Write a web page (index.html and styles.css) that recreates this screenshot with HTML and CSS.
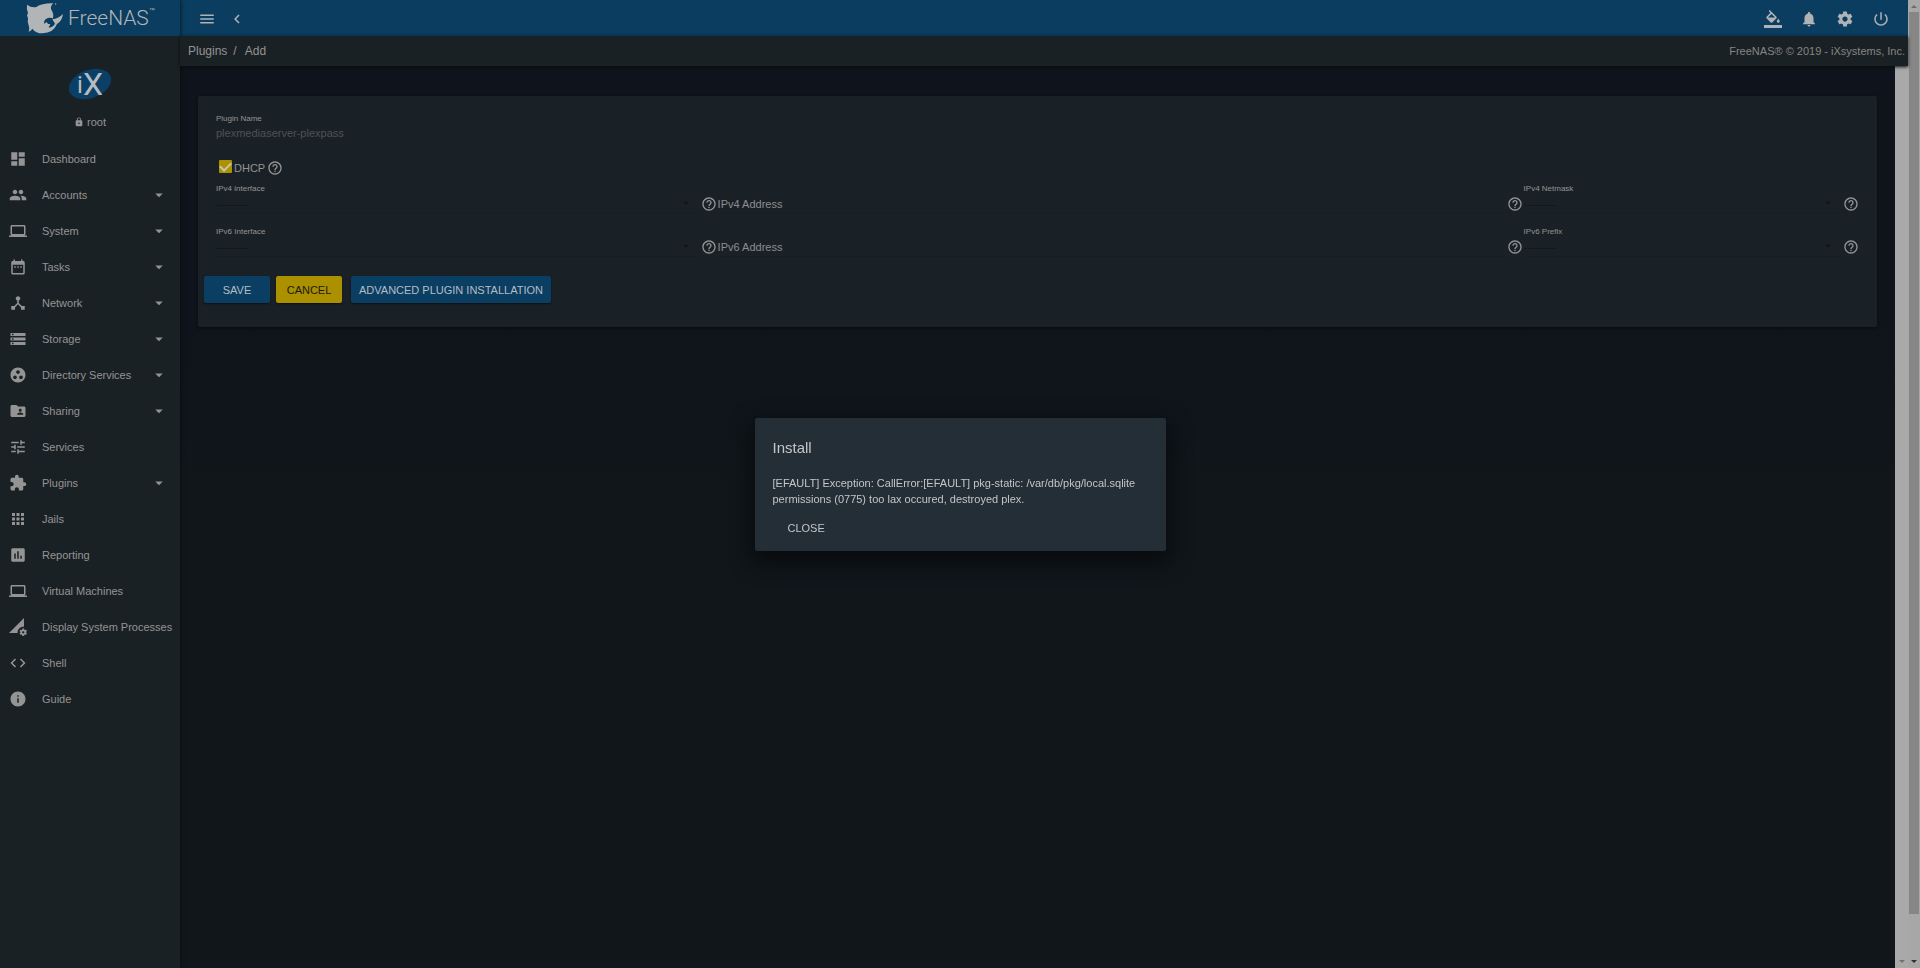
FILE: index.html
```html
<!DOCTYPE html>
<html lang="en">
<head>
<meta charset="utf-8">
<title>FreeNAS - Plugins - Add</title>
<link rel="stylesheet" href="styles.css">
</head>
<body>
<svg class="sprite" aria-hidden="true">
  <symbol id="menu" viewBox="0 0 24 24"><path d="M3 18h18v-2H3v2zm0-5h18v-2H3v2zm0-7v2h18V6H3z"/></symbol>
  <symbol id="chevron" viewBox="0 0 24 24"><path d="M15.41 7.41L14 6l-6 6 6 6 1.41-1.41L10.83 12z"/></symbol>
  <symbol id="fill" viewBox="0 0 24 24"><path d="M16.56 8.94L7.62 0 6.21 1.41l2.38 2.38-5.15 5.15c-.59.59-.59 1.54 0 2.12l5.5 5.5c.29.29.68.44 1.06.44s.77-.15 1.06-.44l5.5-5.5c.59-.58.59-1.53 0-2.12zM5.21 10L10 5.21 14.79 10H5.21zM19 11.5s-2 2.17-2 3.5c0 1.1.9 2 2 2s2-.9 2-2c0-1.33-2-3.5-2-3.5zM0 20h24v4H0z"/></symbol>
  <symbol id="bell" viewBox="0 0 24 24"><path d="M12 22c1.1 0 2-.9 2-2h-4c0 1.1.89 2 2 2zm6-6v-5c0-3.07-1.64-5.64-4.5-6.32V4c0-.83-.67-1.5-1.5-1.5s-1.5.67-1.5 1.5v.68C7.63 5.36 6 7.92 6 11v5l-2 2v1h16v-1l-2-2z"/></symbol>
  <symbol id="gear" viewBox="0 0 24 24"><path d="M19.43 12.98c.04-.32.07-.64.07-.98s-.03-.66-.07-.98l2.11-1.65c.19-.15.24-.42.12-.64l-2-3.46c-.12-.22-.39-.3-.61-.22l-2.49 1c-.52-.4-1.08-.73-1.69-.98l-.38-2.65C14.46 2.18 14.25 2 14 2h-4c-.25 0-.46.18-.49.42l-.38 2.65c-.61.25-1.17.59-1.69.98l-2.49-1c-.23-.09-.49 0-.61.22l-2 3.46c-.13.22-.07.49.12.64l2.11 1.65c-.04.32-.07.65-.07.98s.03.66.07.98l-2.11 1.65c-.19.15-.24.42-.12.64l2 3.46c.12.22.39.3.61.22l2.49-1c.52.4 1.08.73 1.69.98l.38 2.65c.03.24.24.42.49.42h4c.25 0 .46-.18.49-.42l.38-2.65c.61-.25 1.17-.59 1.69-.98l2.49 1c.23.09.49 0 .61-.22l2-3.46c.12-.22.07-.49-.12-.64l-2.11-1.65zM12 15.5c-1.93 0-3.5-1.57-3.5-3.5s1.57-3.5 3.5-3.5 3.5 1.57 3.5 3.5-1.57 3.5-3.5 3.5z"/></symbol>
  <symbol id="power" viewBox="0 0 24 24"><path d="M13 3h-2v10h2V3zm4.83 2.17l-1.42 1.42C17.99 7.86 19 9.81 19 12c0 3.87-3.13 7-7 7s-7-3.13-7-7c0-2.19 1.01-4.14 2.58-5.42L6.17 5.17C4.23 6.82 3 9.26 3 12c0 4.97 4.03 9 9 9s9-4.03 9-9c0-2.74-1.23-5.18-3.17-6.83z"/></symbol>
  <symbol id="lock" viewBox="0 0 24 24"><path d="M18 8h-1V6c0-2.76-2.24-5-5-5S7 3.24 7 6v2H6c-1.1 0-2 .9-2 2v10c0 1.1.9 2 2 2h12c1.1 0 2-.9 2-2V10c0-1.1-.9-2-2-2zm-6 9c-1.1 0-2-.9-2-2s.9-2 2-2 2 .9 2 2-.9 2-2 2zm3.1-9H8.9V6c0-1.71 1.39-3.1 3.1-3.1 1.71 0 3.1 1.39 3.1 3.1v2z"/></symbol>
  <symbol id="dashboard" viewBox="0 0 24 24"><path d="M3 13h8V3H3v10zm0 8h8v-6H3v6zm10 0h8V11h-8v10zm0-18v6h8V3h-8z"/></symbol>
  <symbol id="people" viewBox="0 0 24 24"><path d="M16 11c1.66 0 2.99-1.34 2.99-3S17.66 5 16 5c-1.66 0-3 1.34-3 3s1.34 3 3 3zm-8 0c1.66 0 2.99-1.34 2.99-3S9.66 5 8 5C6.34 5 5 6.34 5 8s1.34 3 3 3zm0 2c-2.33 0-7 1.17-7 3.5V19h14v-2.5c0-2.33-4.67-3.5-7-3.5zm8 0c-.29 0-.62.02-.97.05 1.16.84 1.97 1.97 1.97 3.45V19h6v-2.5c0-2.33-4.67-3.5-7-3.5z"/></symbol>
  <symbol id="laptop" viewBox="0 0 24 24"><path d="M20 18c1.1 0 1.99-.9 1.99-2L22 6c0-1.1-.9-2-2-2H4c-1.1 0-2 .9-2 2v10c0 1.1.9 2 2 2H0v2h24v-2h-4zM4 6h16v10H4V6z"/></symbol>
  <symbol id="date" viewBox="0 0 24 24"><path d="M9 11H7v2h2v-2zm4 0h-2v2h2v-2zm4 0h-2v2h2v-2zm2-7h-1V2h-2v2H8V2H6v2H5c-1.11 0-1.99.9-1.99 2L3 20c0 1.1.89 2 2 2h14c1.1 0 2-.9 2-2V6c0-1.1-.9-2-2-2zm0 16H5V9h14v11z"/></symbol>
  <symbol id="hub" viewBox="0 0 24 24"><path d="M17 16l-4-4V8.82C14.16 8.4 15 7.3 15 6c0-1.66-1.34-3-3-3S9 4.34 9 6c0 1.3.84 2.4 2 2.82V12l-4 4H3v5h5v-3.05l4-4.2 4 4.2V21h5v-5h-4z"/></symbol>
  <symbol id="storage" viewBox="0 0 24 24"><path d="M2 20h20v-4H2v4zm2-3h2v2H4v-2zM2 4v4h20V4H2zm4 3H4V5h2v2zm-4 7h20v-4H2v4zm2-3h2v2H4v-2z"/></symbol>
  <symbol id="group" viewBox="0 0 24 24"><path d="M12 2C6.48 2 2 6.48 2 12s4.48 10 10 10 10-4.48 10-10S17.52 2 12 2zM8 17.5c-1.38 0-2.5-1.12-2.5-2.5s1.12-2.5 2.5-2.5 2.5 1.12 2.5 2.5-1.12 2.5-2.5 2.5zM9.5 8c0-1.38 1.12-2.5 2.5-2.5s2.5 1.12 2.5 2.5-1.12 2.5-2.5 2.5S9.5 9.38 9.5 8zm6.5 9.5c-1.38 0-2.5-1.12-2.5-2.5s1.12-2.5 2.5-2.5 2.5 1.12 2.5 2.5-1.12 2.5-2.5 2.5z"/></symbol>
  <symbol id="folder" viewBox="0 0 24 24"><path d="M20 6h-8l-2-2H4c-1.1 0-1.99.9-1.99 2L2 18c0 1.1.9 2 2 2h16c1.1 0 2-.9 2-2V8c0-1.1-.9-2-2-2zm-5 3c1.1 0 2 .9 2 2s-.9 2-2 2-2-.9-2-2 .9-2 2-2zm4 8h-8v-1c0-1.33 2.67-2 4-2s4 .67 4 2v1z"/></symbol>
  <symbol id="tune" viewBox="0 0 24 24"><path d="M3 17v2h6v-2H3zM3 5v2h10V5H3zm10 16v-2h8v-2h-8v-2h-2v6h2zM7 9v2H3v2h4v2h2V9H7zm14 4v-2H11v2h10zm-6-4h2V7h4V5h-4V3h-2v6z"/></symbol>
  <symbol id="extension" viewBox="0 0 24 24"><path d="M20.5 11H19V7c0-1.1-.9-2-2-2h-4V3.5C13 2.12 11.88 1 10.5 1S8 2.12 8 3.5V5H4c-1.1 0-1.99.9-1.99 2v3.8H3.5c1.49 0 2.7 1.21 2.7 2.7s-1.21 2.7-2.7 2.7H2V20c0 1.1.9 2 2 2h3.8v-1.5c0-1.49 1.21-2.7 2.7-2.7 1.49 0 2.7 1.21 2.7 2.7V22H17c1.1 0 2-.9 2-2v-4h1.5c1.38 0 2.5-1.12 2.5-2.5S21.88 11 20.5 11z"/></symbol>
  <symbol id="apps" viewBox="0 0 24 24"><path d="M4 8h4V4H4v4zm6 12h4v-4h-4v4zm-6 0h4v-4H4v4zm0-6h4v-4H4v4zm6 0h4v-4h-4v4zm6-10v4h4V4h-4zm-6 4h4V4h-4v4zm6 6h4v-4h-4v4zm0 6h4v-4h-4v4z"/></symbol>
  <symbol id="chart" viewBox="0 0 24 24"><path d="M19 3H5c-1.1 0-2 .9-2 2v14c0 1.1.9 2 2 2h14c1.1 0 2-.9 2-2V5c0-1.1-.9-2-2-2zM9 17H7v-7h2v7zm4 0h-2V7h2v10zm4 0h-2v-4h2v4z"/></symbol>
  <symbol id="process" viewBox="0 0 24 24"><path d="M18.99 11.5c.34 0 .67.03 1 .07L20 0 0 20h11.56c-.04-.33-.07-.66-.07-1 0-4.14 3.36-7.5 7.5-7.5zm3.71 7.99c.02-.16.04-.32.04-.49 0-.17-.01-.33-.04-.49l1.06-.83c.09-.08.12-.21.06-.32l-1-1.73c-.06-.11-.19-.15-.31-.11l-1.24.5c-.26-.2-.54-.37-.85-.49l-.19-1.32c-.01-.12-.12-.21-.24-.21h-2c-.12 0-.23.09-.25.21l-.19 1.32c-.3.13-.59.29-.85.49l-1.24-.5c-.11-.04-.24 0-.31.11l-1 1.73c-.06.11-.04.24.06.32l1.06.83c-.02.16-.03.32-.03.49 0 .17.01.33.03.49l-1.06.83c-.09.08-.12.21-.06.32l1 1.73c.06.11.19.15.31.11l1.24-.5c.26.2.54.37.85.49l.19 1.32c.02.12.12.21.25.21h2c.12 0 .23-.09.25-.21l.19-1.32c.3-.13.59-.29.84-.49l1.25.5c.11.04.24 0 .31-.11l1-1.73c.06-.11.03-.24-.06-.32l-1.07-.83zm-3.71 1.01c-.83 0-1.5-.67-1.5-1.5s.67-1.5 1.5-1.5 1.5.67 1.5 1.5-.67 1.5-1.5 1.5z"/></symbol>
  <symbol id="code" viewBox="0 0 24 24"><path d="M9.4 16.6L4.8 12l4.6-4.6L8 6l-6 6 6 6 1.4-1.4zm5.2 0l4.6-4.6-4.6-4.6L16 6l6 6-6 6-1.4-1.4z"/></symbol>
  <symbol id="info" viewBox="0 0 24 24"><path d="M12 2C6.48 2 2 6.48 2 12s4.48 10 10 10 10-4.48 10-10S17.52 2 12 2zm1 15h-2v-6h2v6zm0-8h-2V7h2v2z"/></symbol>
  <symbol id="drop" viewBox="0 0 24 24"><path d="M7 10l5 5 5-5z"/></symbol>
  <symbol id="help" viewBox="0 0 24 24"><path d="M11 18h2v-2h-2v2zm1-16C6.48 2 2 6.48 2 12s4.48 10 10 10 10-4.48 10-10S17.52 2 12 2zm0 18c-4.41 0-8-3.59-8-8s3.59-8 8-8 8 3.59 8 8-3.59 8-8 8zm0-14c-2.21 0-4 1.79-4 4h2c0-1.1.9-2 2-2s2 .9 2 2c0 2-3 1.75-3 5h2c0-2.25 3-2.5 3-5 0-2.21-1.79-4-4-4z"/></symbol>
</svg>

<div class="app">
  <aside class="sidebar">
    <a class="brand" href="#">
      <svg class="shark" viewBox="0 0 114 96" aria-hidden="true"><path d="M3 8Q16 18 31 15Q48 3 82 4Q73 11 75 22Q84 34 81 49Q69 45 60 51Q52 57 55 65L62 60L66 66L73 66L68 77Q82 75 87 65L79 52Q96 51 111 36Q108 58 93 66Q82 93 50 94Q29 94 19 80Q15 87 8 89Q11 82 9 74Q3 60 6 49L3 40L6 34Q1 20 3 8Z"/><circle cx="89" cy="6" r="2"/></svg>
      <span class="brand-name">FreeNAS</span><span class="brand-tm">™</span>
    </a>
    <div class="profile">
      <svg class="ix" viewBox="0 0 44 36" role="img" aria-label="iX"><ellipse cx="22" cy="18" rx="22" ry="14" transform="rotate(-20 22 18)"/><text class="ix-i" x="9" y="27">i</text><text class="ix-x" x="15" y="29">X</text></svg>
      <div class="user"><svg class="icon-xs"><use href="#lock"/></svg><span>root</span></div>
    </div>
    <nav class="nav">
      <a href="#"><svg class="icon"><use href="#dashboard"/></svg><span>Dashboard</span></a>
      <a href="#"><svg class="icon"><use href="#people"/></svg><span>Accounts</span><svg class="icon caret"><use href="#drop"/></svg></a>
      <a href="#"><svg class="icon"><use href="#laptop"/></svg><span>System</span><svg class="icon caret"><use href="#drop"/></svg></a>
      <a href="#"><svg class="icon"><use href="#date"/></svg><span>Tasks</span><svg class="icon caret"><use href="#drop"/></svg></a>
      <a href="#"><svg class="icon"><use href="#hub"/></svg><span>Network</span><svg class="icon caret"><use href="#drop"/></svg></a>
      <a href="#"><svg class="icon"><use href="#storage"/></svg><span>Storage</span><svg class="icon caret"><use href="#drop"/></svg></a>
      <a href="#"><svg class="icon"><use href="#group"/></svg><span>Directory Services</span><svg class="icon caret"><use href="#drop"/></svg></a>
      <a href="#"><svg class="icon"><use href="#folder"/></svg><span>Sharing</span><svg class="icon caret"><use href="#drop"/></svg></a>
      <a href="#"><svg class="icon"><use href="#tune"/></svg><span>Services</span></a>
      <a href="#"><svg class="icon"><use href="#extension"/></svg><span>Plugins</span><svg class="icon caret"><use href="#drop"/></svg></a>
      <a href="#"><svg class="icon"><use href="#apps"/></svg><span>Jails</span></a>
      <a href="#"><svg class="icon"><use href="#chart"/></svg><span>Reporting</span></a>
      <a href="#"><svg class="icon"><use href="#laptop"/></svg><span>Virtual Machines</span></a>
      <a href="#"><svg class="icon"><use href="#process"/></svg><span>Display System Processes</span></a>
      <a href="#"><svg class="icon"><use href="#code"/></svg><span>Shell</span></a>
      <a href="#"><svg class="icon"><use href="#info"/></svg><span>Guide</span></a>
    </nav>
  </aside>

  <div class="main">
    <header class="topbar">
      <div class="tools tools-left">
        <button type="button" aria-label="Toggle menu"><svg class="icon"><use href="#menu"/></svg></button>
        <button type="button" aria-label="Collapse menu"><svg class="icon"><use href="#chevron"/></svg></button>
      </div>
      <div class="tools">
        <button type="button" aria-label="Theme"><svg class="icon"><use href="#fill"/></svg></button>
        <button type="button" aria-label="Notifications"><svg class="icon"><use href="#bell"/></svg></button>
        <button type="button" aria-label="Settings"><svg class="icon"><use href="#gear"/></svg></button>
        <button type="button" aria-label="Power"><svg class="icon"><use href="#power"/></svg></button>
      </div>
    </header>
    <div class="crumbs">
      <div class="trail"><a href="#">Plugins</a><span class="slash">/</span><a href="#">Add</a></div>
      <span class="copyright">FreeNAS® © 2019 - iXsystems, Inc.</span>
    </div>
    <div class="view">
      <main class="content">
        <form class="card">
          <div class="field">
            <label for="name">Plugin Name</label>
            <input class="control" id="name" type="text" value="plexmediaserver-plexpass" readonly>
          </div>
          <div class="check">
            <input id="dhcp" type="checkbox" checked>
            <label for="dhcp">DHCP</label>
            <svg class="help"><use href="#help"/></svg>
          </div>
          <div class="row">
            <div class="cell">
              <div class="field"><label for="v4if">IPv4 interface</label>
                <div class="pick"><select class="control" id="v4if"><option>---------</option></select><svg class="pick-arrow"><use href="#drop"/></svg></div></div>
              <svg class="help"><use href="#help"/></svg>
            </div>
            <div class="cell">
              <div class="field"><input class="control address" type="text" placeholder="IPv4 Address" aria-label="IPv4 Address"></div>
              <svg class="help"><use href="#help"/></svg>
            </div>
            <div class="cell">
              <div class="field"><label for="v4mask">IPv4 Netmask</label>
                <div class="pick"><select class="control" id="v4mask"><option>---------</option></select><svg class="pick-arrow"><use href="#drop"/></svg></div></div>
              <svg class="help"><use href="#help"/></svg>
            </div>
          </div>
          <div class="row">
            <div class="cell">
              <div class="field"><label for="v6if">IPv6 Interface</label>
                <div class="pick"><select class="control" id="v6if"><option>---------</option></select><svg class="pick-arrow"><use href="#drop"/></svg></div></div>
              <svg class="help"><use href="#help"/></svg>
            </div>
            <div class="cell">
              <div class="field"><input class="control address" type="text" placeholder="IPv6 Address" aria-label="IPv6 Address"></div>
              <svg class="help"><use href="#help"/></svg>
            </div>
            <div class="cell">
              <div class="field"><label for="v6prefix">IPv6 Prefix</label>
                <div class="pick"><select class="control" id="v6prefix"><option>---------</option></select><svg class="pick-arrow"><use href="#drop"/></svg></div></div>
              <svg class="help"><use href="#help"/></svg>
            </div>
          </div>
          <div class="actions">
            <button class="btn primary" type="submit">SAVE</button>
            <button class="btn accent" type="button">CANCEL</button>
            <button class="btn primary advanced" type="button">ADVANCED PLUGIN INSTALLATION</button>
          </div>
        </form>
      </main>
      <div class="inner-scroll" aria-hidden="true"><i class="arrow down dim"></i></div>
    </div>
  </div>
</div>
<div class="page-scroll" aria-hidden="true">
  <i class="arrow up"></i>
  <div class="track"><div class="thumb"></div></div>
  <i class="arrow down"></i>
</div>

<div class="overlay">
  <section class="dialog" role="dialog" aria-labelledby="dlg-title">
    <h1 id="dlg-title">Install</h1>
    <p>[EFAULT] Exception: CallError:[EFAULT] pkg-static: /var/db/pkg/local.sqlite permissions (0775) too lax occured, destroyed plex.</p>
    <button class="close" type="button">CLOSE</button>
  </section>
</div>
</body>
</html>
```
FILE: styles.css
```css
* { box-sizing: border-box; }

body {
  margin: 0;
  display: flex;
  height: 100vh;
  overflow: hidden;
  background: #10161a;
  color: #949494;
  font: 11px/16px "Liberation Sans", Arial, sans-serif;
}

a { color: inherit; text-decoration: none; }
button, input, select { font: inherit; color: inherit; }
button { border: 0; background: none; padding: 0; cursor: pointer; }
svg { display: block; flex: none; fill: currentColor; }
.sprite { position: absolute; width: 0; height: 0; }
.icon { width: 18px; height: 18px; }
.icon-xs { width: 10px; height: 10px; }

.app { flex: 1; min-width: 0; display: flex; }

/* Sidebar */
.sidebar {
  width: 180px;
  flex: none;
  background: #1a2125;
  box-shadow: 0 0 4px #080b0e;
  z-index: 1;
}
.brand {
  display: flex;
  align-items: center;
  height: 36px;
  padding-left: 26px;
  background: #0a3d5f;
  color: #b2b5b7;
}
.shark { width: 38px; height: 32px; }
.brand-name { margin-left: 4px; font: 300 21px/36px Roboto, sans-serif; }
.brand-tm { align-self: flex-start; font-size: 6px; line-height: 20px; }
.profile {
  display: flex;
  flex-direction: column;
  align-items: center;
  gap: 12px;
  height: 105px;
  padding-top: 30px;
}
.ix { width: 44px; height: 36px; overflow: visible; fill: #0a4068; }
.ix text { fill: #b8bbbd; font-family: Roboto, sans-serif; }
.ix-i { font-size: 24px; }
.ix-x { font-size: 32px; }
.user { display: flex; align-items: center; gap: 3px; height: 16px; }
.nav a {
  display: flex;
  align-items: center;
  gap: 15px;
  height: 36px;
  padding: 0 12px 0 9px;
  white-space: nowrap;
}
.nav .caret { margin-left: auto; }

/* Header */
.main { flex: 1; min-width: 0; display: flex; flex-direction: column; }
.topbar {
  display: flex;
  justify-content: space-between;
  align-items: center;
  height: 36px;
  padding: 2px 18px 0;
  background: #0a3d5f;
  color: #b0b3b5;
}
.tools { display: flex; gap: 18px; }
.tools-left { gap: 12px; }
.crumbs {
  display: flex;
  justify-content: space-between;
  align-items: center;
  height: 30px;
  padding: 0 3px 0 8px;
  background: #1a2124;
  box-shadow: 0 1px 3px #090c0f;
  z-index: 1;
}
.trail { font-size: 12px; display: flex; }
.slash { padding: 0 8px 0 6px; }
.copyright { color: #858585; }

/* Form */
.view { flex: 1; display: flex; min-height: 0; }
.content {
  flex: 1;
  min-width: 0;
  padding: 30px 18px;
  background: linear-gradient(#0f131b 250px, #10161a 420px);
}
.card {
  padding: 18px 18px 24px;
  border-radius: 2px;
  background: #1a2126;
  box-shadow: 0 1px 3px #080b0f;
}
.field { flex: 1; min-width: 0; }
.field label { display: block; font-size: 8px; line-height: 10px; }
.control {
  display: block;
  width: 100%;
  height: 20px;
  margin: 0;
  padding: 0;
  border: 0;
  border-bottom: 1px dotted #141a1f;
  border-radius: 0;
  outline: 0;
  background: none;
  appearance: none;
}
#name { height: 18px; border-bottom-color: #181f24; color: #4d5154; }
select.control { color: #101417; }
.address::placeholder { color: #8b8e90; opacity: 1; }
.pick { position: relative; }
.pick-arrow {
  position: absolute;
  right: 3px;
  top: 1px;
  width: 16px;
  height: 16px;
  color: #12161a;
  pointer-events: none;
}
.help { width: 16px; height: 16px; }
.check {
  display: flex;
  align-items: center;
  gap: 2px;
  height: 16px;
  margin: 18px 0 8px 3px;
}
.check input {
  display: flex;
  justify-content: center;
  width: 13px;
  height: 13px;
  margin: 0 0 4px;
  border-radius: 1px;
  background: #ac9100;
  appearance: none;
}
.check input:checked::before {
  content: "";
  width: 5px;
  height: 9px;
  border: solid #c8c8b0;
  border-width: 0 2px 2px 0;
  transform: rotate(45deg);
}
.row {
  display: grid;
  grid-template-columns: 500fr 804fr 335fr;
  gap: 1px;
  height: 30px;
  margin-bottom: 13px;
}
.cell { display: flex; align-items: flex-end; gap: 4px; }
.cell .help { margin-bottom: 2px; }
.actions { display: flex; gap: 6px; margin: 19px -12px 0; }
.btn {
  height: 27px;
  min-width: 66px;
  padding: 0 8px;
  border-radius: 2px;
  color: #b5bdc2;
  box-shadow: 0 1px 2px #0c1014;
}
.primary { background: #0a3e62; }
.accent { background: #ab9000; color: #1c1a06; }
.advanced { margin-left: 3px; }

/* Scroll bars */
.inner-scroll {
  width: 13px;
  display: flex;
  align-items: flex-end;
  justify-content: center;
  padding-bottom: 5px;
  background: #a9a9a9;
}
.page-scroll {
  width: 12px;
  display: flex;
  flex-direction: column;
  align-items: center;
  gap: 4px;
  padding: 5px 0;
  background: #a7a7a7;
}
.track { flex: 1; align-self: stretch; padding: 0 1px; }
.thumb { height: 95.5%; background: #868686; }
.arrow { width: 0; height: 0; border: 3px solid transparent; }
.up { border-top: 0; border-bottom-color: #6c6c6c; }
.down { border-bottom: 0; border-top-color: #303030; }
.dim { border-top-color: #707070; }

/* Dialog */
.overlay {
  position: fixed;
  inset: 0;
  z-index: 10;
  display: flex;
  align-items: center;
  justify-content: center;
}
.dialog {
  width: 411px;
  padding: 18px 18px 15px;
  border-radius: 2px;
  background: #242e36;
  color: #c4c6c8;
  box-shadow: 0 8px 20px 4px #090c0f;
}
.dialog h1 { margin: 0 0 15px; font-size: 15px; line-height: 24px; font-weight: 400; }
.dialog p { margin: 0; }
.close { display: block; margin: 13px 0 0 12px; padding: 0 3px; height: 16px; }
```
